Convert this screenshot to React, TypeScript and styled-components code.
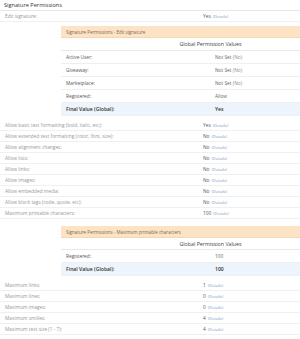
import React from "react";
import styled, { createGlobalStyle } from "styled-components";

const GlobalStyle = createGlobalStyle`
  html, body {
    margin: 0;
    padding: 0;
    background: #ffffff;
  }
  body {
    font-family: "Open Sans", "Liberation Sans", Arial, sans-serif;
    width: 300px;
  }
`;

const Page = styled.div`
  width: 300px;
  display: flex;
  flex-direction: column;
`;

const Heading = styled.div`
  height: 11px;
  padding-left: 4px;
  font-size: 5.6px;
  line-height: 11px;
  color: #333333;
  border-bottom: 1px solid #e4e8ed;
  box-sizing: border-box;
`;

const Row = styled.div`
  display: grid;
  grid-template-columns: 203px 1fr;
  height: 11px;
  line-height: 11px;
  font-size: 4.8px;
  border-bottom: 1px solid #eef1f4;
  box-sizing: border-box;
`;

const Label = styled.div`
  padding-left: 5px;
  color: #979797;
  white-space: nowrap;
`;

const Value = styled.div`
  color: #555555;
  white-space: nowrap;
`;

const Details = styled.span`
  color: #7899c0;
  font-size: 4.1px;
  margin-left: 2px;
`;

const Muted = styled.span`
  color: #8e8e8e;
`;

const Group = styled.div`
  display: flex;
  flex-direction: column;
`;

const Inner = styled.div<{ $top: number; $bottom: number }>`
  margin: ${(p) => p.$top}px 0 ${(p) => p.$bottom}px 61px;
  display: flex;
  flex-direction: column;
`;

const OrangeBar = styled.div`
  height: 12px;
  line-height: 12px;
  background: #fde3c5;
  border-bottom: 1px solid #f7d5ae;
  box-sizing: border-box;
  padding-left: 5px;
  font-size: 4.5px;
  color: #7a6752;
  white-space: nowrap;
`;

const TableHead = styled.div<{ $h: number }>`
  height: ${(p) => p.$h}px;
  line-height: ${(p) => p.$h}px;
  padding-left: 60px;
  text-align: center;
  font-size: 5.3px;
  color: #444444;
  border-bottom: 1px solid #e6eaef;
  box-sizing: border-box;
`;

const TableRow = styled.div<{ $final?: boolean }>`
  display: grid;
  grid-template-columns: 154px 1fr;
  height: 13px;
  line-height: 13px;
  font-size: ${(p) => (p.$final ? 5.1 : 4.8)}px;
  background: ${(p) => (p.$final ? "#edf4fb" : "#ffffff")};
  border-bottom: 1px solid #edf0f3;
  box-sizing: border-box;
`;

const TableLabel = styled.div<{ $final?: boolean }>`
  padding-left: 5px;
  color: ${(p) => (p.$final ? "#333333" : "#555555")};
  font-weight: ${(p) => (p.$final ? 600 : 400)};
  white-space: nowrap;
`;

const TableValue = styled.div<{ $final?: boolean }>`
  color: ${(p) => (p.$final ? "#333333" : "#666666")};
  font-weight: ${(p) => (p.$final ? 600 : 400)};
  white-space: nowrap;
`;

type Perm = { label: string; value: string };

const formatting: Perm[] = [
  { label: "Allow basic text formatting (bold, italic, etc):", value: "Yes" },
  { label: "Allow extended text formatting (color, font, size):", value: "No" },
  { label: "Allow alignment changes:", value: "No" },
  { label: "Allow lists:", value: "No" },
  { label: "Allow links:", value: "No" },
  { label: "Allow images:", value: "No" },
  { label: "Allow embedded media:", value: "No" },
  { label: "Allow block tags (code, quote, etc):", value: "No" },
  { label: "Maximum printable characters:", value: "100" },
];

const maximums: Perm[] = [
  { label: "Maximum links:", value: "1" },
  { label: "Maximum lines:", value: "0" },
  { label: "Maximum images:", value: "0" },
  { label: "Maximum smilies:", value: "4" },
  { label: "Maximum text size (1 - 7):", value: "4" },
];

const PermRow: React.FC<Perm> = ({ label, value }) => (
  <Row>
    <Label>{label}</Label>
    <Value>
      {value}
      <Details>(Details)</Details>
    </Value>
  </Row>
);

const App: React.FC = () => {
  return (
    <Page>
      <GlobalStyle />
      <Heading>Signature Permissions</Heading>
      <PermRow label="Edit signature:" value="Yes" />

      <Inner $top={4} $bottom={4}>
        <OrangeBar>Signature Permissions - Edit signature</OrangeBar>
        <TableHead $h={13}>Global Permission Values</TableHead>
        {["Active User:", "Giveaway:", "Marketplace:"].map((name) => (
          <TableRow key={name}>
            <TableLabel>{name}</TableLabel>
            <TableValue>
              Not Set <Muted>(No)</Muted>
            </TableValue>
          </TableRow>
        ))}
        <TableRow>
          <TableLabel>Registered:</TableLabel>
          <TableValue>Allow</TableValue>
        </TableRow>
        <TableRow $final>
          <TableLabel $final>Final Value (Global):</TableLabel>
          <TableValue $final>Yes</TableValue>
        </TableRow>
      </Inner>

      <Group>
        {formatting.map((p) => (
          <PermRow key={p.label} {...p} />
        ))}
      </Group>

      <Inner $top={7} $bottom={4}>
        <OrangeBar>Signature Permissions - Maximum printable characters</OrangeBar>
        <TableHead $h={12}>Global Permission Values</TableHead>
        <TableRow>
          <TableLabel>Registered:</TableLabel>
          <TableValue>100</TableValue>
        </TableRow>
        <TableRow $final>
          <TableLabel $final>Final Value (Global):</TableLabel>
          <TableValue $final>100</TableValue>
        </TableRow>
      </Inner>

      <Group>
        {maximums.map((p) => (
          <PermRow key={p.label} {...p} />
        ))}
      </Group>
    </Page>
  );
};

export default App;
